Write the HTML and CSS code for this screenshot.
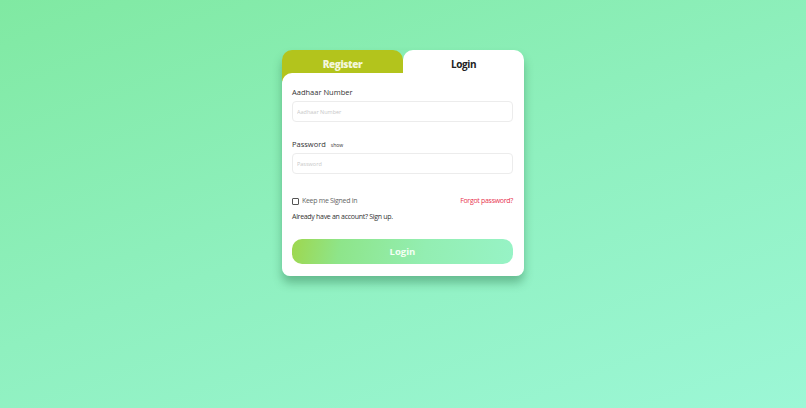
FILE: index.html
```html
<!DOCTYPE html>
<html lang="en">
<head>
<meta charset="utf-8">
<title>Login</title>
<link rel="stylesheet" href="styles.css">
</head>
<body>
<div class="card">
  <div class="tabs">
    <div class="tab tab-register">Register</div>
    <div class="tab tab-login">Login</div>
  </div>
  <form class="panel">
    <label class="label">Aadhaar Number</label>
    <input class="field" type="text" placeholder="Aadhaar Number">
    <label class="label label-pw">Password <span class="show">show</span></label>
    <input class="field" type="password" placeholder="Password">
    <div class="row">
      <span class="keep"><span class="box"></span>Keep me Signed in</span>
      <span class="forgot">Forgot password?</span>
    </div>
    <div class="already">Already have an account? Sign up.</div>
    <div class="btn">Login</div>
  </form>
</div>
</body>
</html>
```
FILE: styles.css
```css
html, body {
  margin: 0;
  height: 100%;
}
body {
  width: 806px;
  height: 408px;
  background: linear-gradient(160deg, #80e9a2 0%, #8ff0bf 50%, #9cf7d6 100%);
  font-family: "Open Sans", "Liberation Sans", sans-serif;
  overflow: hidden;
  padding-top: 50px;
  box-sizing: border-box;
  -webkit-font-smoothing: antialiased;
}
.card {
  width: 242px;
  margin-left: 282px;
  border-radius: 10px 10px 8px 8px;
  box-shadow: 0 7px 10px rgba(20, 90, 50, 0.35);
}
.tabs {
  display: flex;
  height: 31px;
}
.tab {
  flex: 1;
  border-radius: 10px 10px 0 0;
  text-align: center;
  font-size: 10px;
  letter-spacing: -0.4px;
  font-weight: 800;
  line-height: 13px;
  padding-top: 8px;
  box-sizing: border-box;
}
.tab-register {
  background: #b3c41c;
  color: #f4f7dc;
}
.tab-login {
  background: #fff;
  color: #222;
  font-weight: 700;
}
.panel {
  position: relative;
  margin: -8px 0 0;
  background: #fff;
  border-radius: 10px 0 8px 8px;
  padding: 14px 11px 12px 10px;
  display: flex;
  flex-direction: column;
}
.label {
  display: block;
  font-size: 7.5px;
  line-height: 11px;
  height: 11px;
  color: #333;
}
.label-pw {
  margin-top: 17px;
}
.show {
  font-size: 5px;
  margin-left: 3px;
  color: #333;
}
.field {
  margin: 3px 0 0;
  height: 21px;
  box-sizing: border-box;
  border: 1px solid #ececec;
  border-radius: 4px;
  padding: 0 4px;
  font-family: inherit;
  font-size: 5.5px;
  outline: none;
}
.field::placeholder {
  color: #c8c8c8;
}
.row {
  margin-top: 22px;
  display: flex;
  justify-content: space-between;
  align-items: center;
  font-size: 7px;
  letter-spacing: -0.3px;
  line-height: 10px;
}
.keep {
  display: flex;
  align-items: center;
  color: #666;
}
.box {
  width: 7px;
  height: 7px;
  border: 1px solid #555;
  border-radius: 1px;
  margin-right: 3px;
  box-sizing: border-box;
}
.forgot {
  color: #e8334f;
}
.already {
  margin-top: 6px;
  font-size: 7px;
  letter-spacing: -0.3px;
  line-height: 10px;
  color: #333;
}
.btn {
  margin-top: 17px;
  height: 25px;
  border-radius: 10px;
  background: linear-gradient(100deg, #9ed74e 0%, #8ee58a 22%, #93eeb2 60%, #97f3c6 100%);
  color: #f4fff4;
  font-size: 9.5px;
  font-weight: 700;
  line-height: 25px;
  text-align: center;
}
```
